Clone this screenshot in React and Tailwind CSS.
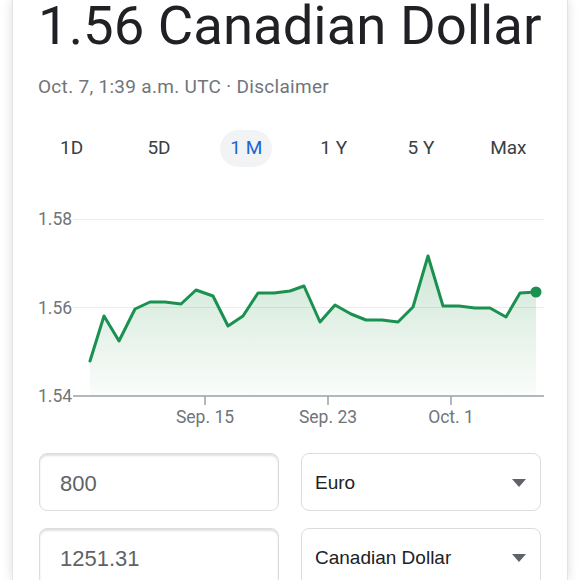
import React from 'react';

const POINTS = [
  [89, 361], [103, 316], [118, 341], [134, 309], [149, 302], [164, 302],
  [180, 304], [195, 290], [212, 296], [227, 326], [242, 316], [257, 293],
  [273, 293], [289, 291], [303, 286], [319, 322], [334, 305], [350, 314],
  [365, 320], [381, 320], [397, 322], [412, 307], [427, 256], [442, 306],
  [458, 306], [474, 308], [489, 308], [505, 317], [519, 293], [535, 292],
];

const TABS = ['1D', '5D', '1 M', '1 Y', '5 Y', 'Max'];

const Chart = () => {
  // chart svg starts at page x=12, y=200
  const pts = POINTS.map(([x, y]) => [x - 12, y - 200]);
  const line = pts.map((p) => p.join(',')).join(' ');
  const area = `${pts[0][0]},196 ${line} ${pts[pts.length - 1][0]},196`;
  const last = pts[pts.length - 1];

  return (
    <svg width="556" height="236" className="block" style={{ fontFamily: 'Roboto, Arial, sans-serif' }}>
      <defs>
        <linearGradient id="fill" x1="0" y1="0" x2="0" y2="1">
          <stop offset="0" stopColor="#1e8e3e" stopOpacity="0.22" />
          <stop offset="1" stopColor="#1e8e3e" stopOpacity="0.02" />
        </linearGradient>
      </defs>
      <line x1="60" x2="531" y1="19.5" y2="19.5" stroke="#ececec" strokeWidth="1" />
      <line x1="60" x2="531" y1="107.5" y2="107.5" stroke="#ececec" strokeWidth="1" />
      <polygon points={area} fill="url(#fill)" />
      <polyline points={line} fill="none" stroke="#1a9150" strokeWidth="3" strokeLinejoin="round" strokeLinecap="round" />
      <circle cx={last[0]} cy={last[1]} r="5.5" fill="#1a9150" />
      <line x1="60" x2="531" y1="196" y2="196" stroke="#9aa0a6" strokeWidth="1.5" />
      {[192, 315, 438].map((x) => (
        <line key={x} x1={x} x2={x} y1="196" y2="205" stroke="#9aa0a6" strokeWidth="1.5" />
      ))}
      <g fill="#70757a" fontSize="17.5">
        <text x="25" y="25">1.58</text>
        <text x="25" y="114">1.56</text>
        <text x="25" y="202">1.54</text>
        <text x="192" y="223" textAnchor="middle">Sep. 15</text>
        <text x="315" y="223" textAnchor="middle">Sep. 23</text>
        <text x="438" y="223" textAnchor="middle">Oct. 1</text>
      </g>
    </svg>
  );
};

const Caret = () => (
  <svg width="14" height="8" viewBox="0 0 14 8" className="shrink-0">
    <path d="M0 0 L14 0 L7 8 Z" fill="#5f6368" />
  </svg>
);

export default function App() {
  return (
    <div className="w-[580px] h-[580px] overflow-hidden bg-white px-3 font-['Liberation_Sans',Arial,sans-serif]">
      <div className="h-full bg-white shadow-[0_0_10px_rgba(0,0,0,0.14)] border-x border-[#e4e4e4]">
        {/* Header */}
        <div className="pl-[25px]">
          <h1 className="text-[54.5px] leading-[50px] text-[#202124] font-['Roboto',sans-serif] font-normal">
            1.56 Canadian Dollar
          </h1>
          <p className="mt-[23px] text-[19px] tracking-[0.3px] text-[#70757a] font-['Roboto',sans-serif]">
            Oct. 7, 1:39 a.m. UTC · Disclaimer
          </p>
        </div>

        {/* Range tabs */}
        <div className="mt-[28px] ml-[15px] w-[524px] grid grid-cols-6 font-['Roboto',sans-serif] text-[19px] text-[#3c4043]">
          {TABS.map((t) => (
            <div key={t} className="flex justify-center">
              <span
                className={
                  t === '1 M'
                    ? 'h-[37px] px-[10px] rounded-full bg-[#f1f3f4] text-[#1967d2] flex items-center'
                    : 'h-[37px] flex items-center'
                }
              >
                {t}
              </span>
            </div>
          ))}
        </div>

        {/* Chart */}
        <div className="mt-[33px]">
          <Chart />
        </div>

        {/* Converter */}
        <div className="mt-[17px] px-[26px] grid grid-cols-2 gap-x-[22px] gap-y-[17px]">
          <div className="h-[58px] rounded-[8px] border border-[#dadce0] shadow-[inset_0_2px_2px_rgba(0,0,0,0.12)] flex items-center px-[20px] pt-[3px] text-[22px] text-[#5f6368]">
            800
          </div>
          <div className="h-[58px] rounded-[8px] border border-[#dadce0] flex items-center justify-between pl-[13px] pr-[14px] pt-[3px] text-[19px] text-[#202124]">
            <span>Euro</span>
            <Caret />
          </div>
          <div className="h-[58px] rounded-[8px] border border-[#dadce0] shadow-[inset_0_2px_2px_rgba(0,0,0,0.12)] flex items-center px-[20px] pt-[3px] text-[22px] text-[#5f6368]">
            1251.31
          </div>
          <div className="h-[58px] rounded-[8px] border border-[#dadce0] flex items-center justify-between pl-[13px] pr-[14px] pt-[3px] text-[19px] text-[#202124]">
            <span>Canadian Dollar</span>
            <Caret />
          </div>
        </div>
      </div>
    </div>
  );
}
